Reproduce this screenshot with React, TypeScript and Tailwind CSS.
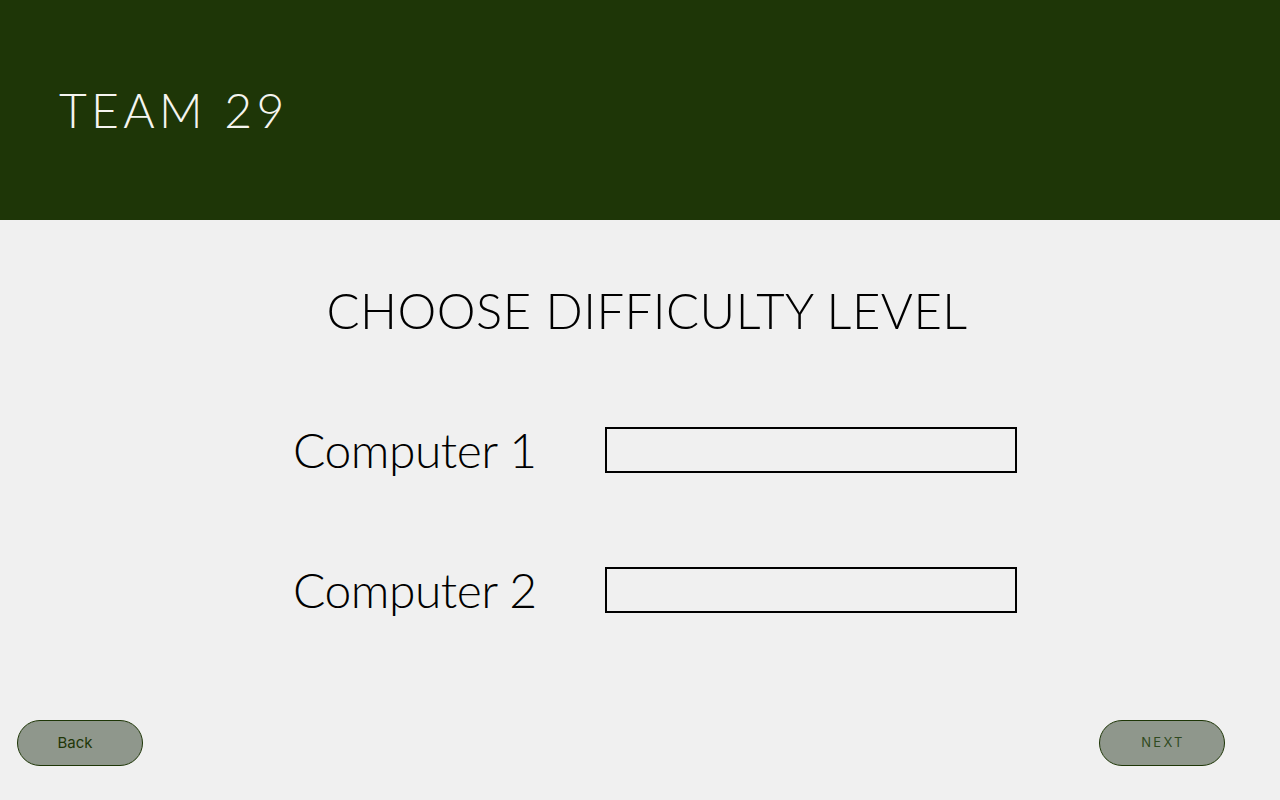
import React from "react";

const App = () => {
  return (
    <div className="min-h-screen w-full bg-[#f0f0f0] flex flex-col">
      <header className="h-[220px] bg-[#1e3607] flex items-center px-[59px]">
        <h1 className="font-['Lato',sans-serif] font-light text-[48px] leading-none tracking-[0.09em] text-[#f5f5f0]">
          TEAM 29
        </h1>
      </header>

      <main className="flex flex-col">
        <h2 className="mt-[60px] h-[60px] leading-[60px] text-center pl-[14px] font-['Lato',sans-serif] font-light text-[49px] tracking-[0.01em] text-black">
          CHOOSE DIFFICULTY LEVEL
        </h2>

        <div className="mt-[87px] flex flex-col gap-[94px] pl-[293px]">
          {["Computer 1", "Computer 2"].map((label) => (
            <div key={label} className="flex items-center h-[46px]">
              <span className="w-[312px] font-['Lato',sans-serif] font-light text-[48px] leading-[46px] tracking-[-0.01em] text-black">
                {label}
              </span>
              <div className="w-[412px] h-[46px] border-2 border-black" />
            </div>
          ))}
        </div>

        <div className="mt-[107px] flex justify-between pl-[17px] pr-[55px]">
          <button className="w-[126px] h-[46px] pr-[10px] rounded-full bg-[#8f978c] border border-[#1e3607] font-['Inter',sans-serif] text-[15px] text-[#1e3607]">
            Back
          </button>
          <button className="w-[126px] h-[46px] pl-[2px] rounded-full bg-[#8f978c] border border-[#1e3607] font-['Inter',sans-serif] text-[13px] tracking-[0.18em] text-[#2f4a20]">
            NEXT
          </button>
        </div>
      </main>
    </div>
  );
};

export default App;
